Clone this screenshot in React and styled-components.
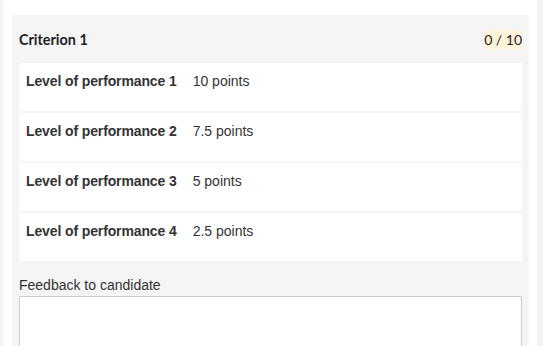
import React from "react";
import styled, { createGlobalStyle } from "styled-components";

const Global = createGlobalStyle`
  html, body { margin: 0; padding: 0; background: #f4f4f4; }
  body { font-family: "Liberation Sans", Arial, sans-serif; color: #333; }
`;

const Page = styled.div`
  display: flex;
  padding: 0 6px 0 3px;
  height: 346px;
  overflow: hidden;
  box-sizing: border-box;
`;

const Card = styled.div`
  flex: 1;
  background: #fff;
  padding: 15px 8px 0 9px;
`;

const Panel = styled.div`
  background: #f5f5f5;
  padding: 0 7px 40px;
`;

const Header = styled.div`
  height: 48px;
  display: flex;
  align-items: center;
  justify-content: space-between;
`;

const Title = styled.h3`
  margin: 0;
  font-family: Lato, sans-serif;
  font-weight: 700;
  font-size: 14.4px;
  color: #1d2125;
`;

const Score = styled.span`
  font-family: Lato, sans-serif;
  font-size: 14px;
  color: #1d2125;
  background: #fff3dc;
  padding: 1px 0;
`;

const Levels = styled.div`
  display: flex;
  flex-direction: column;
  gap: 2px;
`;

const Level = styled.div`
  background: #fff;
  height: 48px;
  box-sizing: border-box;
  padding: 8px 8px 0 7px;
  display: flex;
  gap: 16px;
  font-size: 14px;
  line-height: 20px;
  color: #333;
`;

const LevelName = styled.span`
  font-weight: 700;
  letter-spacing: -0.12px;
`;

const Label = styled.label`
  display: block;
  margin-top: 14px;
  font-size: 14px;
  line-height: 20px;
  color: #333;
`;

const TextArea = styled.textarea`
  display: block;
  width: 100%;
  box-sizing: border-box;
  height: 100px;
  margin-top: 1px;
  border: 1px solid #ccc;
  border-radius: 1px;
  background: #fff;
  resize: none;
`;

const levels = [
  ["Level of performance 1", "10 points"],
  ["Level of performance 2", "7.5 points"],
  ["Level of performance 3", "5 points"],
  ["Level of performance 4", "2.5 points"],
];

export default function App() {
  return (
    <>
      <Global />
      <Page>
        <Card>
          <Panel>
            <Header>
              <Title>Criterion 1</Title>
              <Score>0 / 10</Score>
            </Header>
            <Levels>
              {levels.map(([name, pts]) => (
                <Level key={name}>
                  <LevelName>{name}</LevelName>
                  <span>{pts}</span>
                </Level>
              ))}
            </Levels>
            <Label>Feedback to candidate</Label>
            <TextArea />
          </Panel>
        </Card>
      </Page>
    </>
  );
}
